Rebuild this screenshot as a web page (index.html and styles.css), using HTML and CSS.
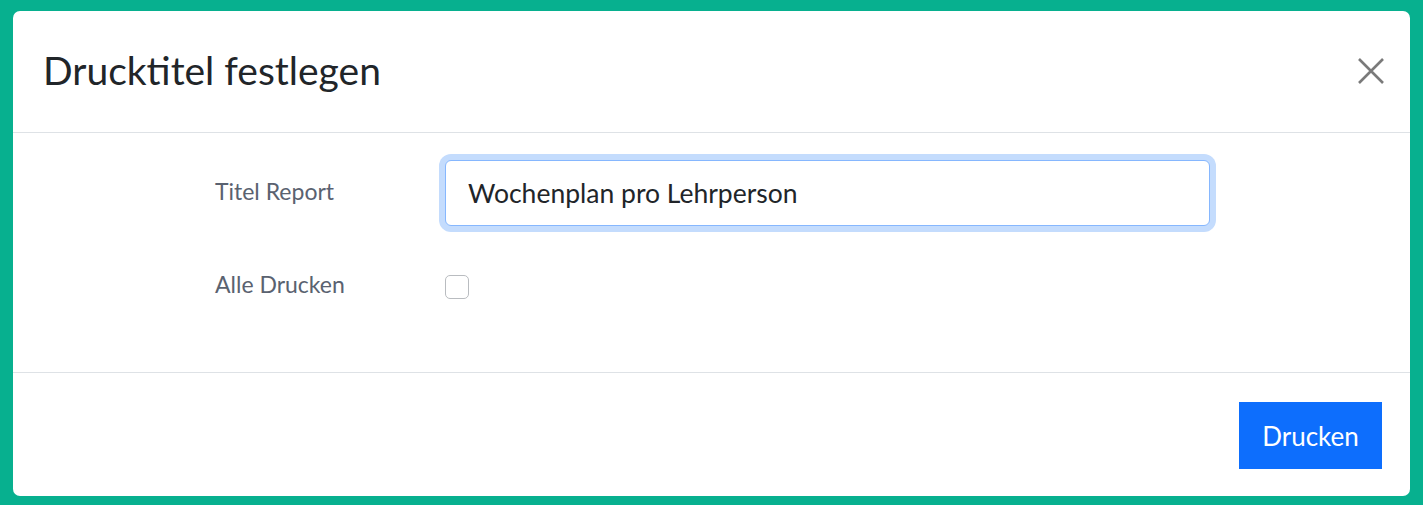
FILE: index.html
```html
<!DOCTYPE html>
<html lang="de">
<head>
<meta charset="utf-8">
<title>Drucktitel festlegen</title>
<link rel="stylesheet" href="styles.css">
</head>
<body>
<div class="modal">
  <div class="modal-header">
    <h1 class="modal-title">Drucktitel festlegen</h1>
    <button class="close" type="button" aria-label="Schließen">
      <svg width="26" height="26" viewBox="0 0 26 26"><path d="M1 1 L25 25 M25 1 L1 25" stroke="#7a7a7a" stroke-width="2.6" fill="none"/></svg>
    </button>
  </div>
  <div class="modal-body">
    <div class="row row-title">
      <label class="label" for="titel">Titel Report</label>
      <input id="titel" class="input" type="text" value="Wochenplan pro Lehrperson">
    </div>
    <div class="row row-check">
      <label class="label" for="alle">Alle Drucken</label>
      <span class="checkbox"></span>
    </div>
  </div>
  <div class="modal-footer">
    <button class="btn" type="button">Drucken</button>
  </div>
</div>
</body>
</html>
```
FILE: styles.css
```css
html, body {
  margin: 0;
  padding: 0;
}
body {
  background: #07b08f;
  font-family: Lato, "Open Sans", sans-serif;
  padding: 11px 13px 9px 13px;
  height: 505px;
  box-sizing: border-box;
}
.modal {
  background: #fff;
  border-radius: 7px;
  height: 485px;
  display: flex;
  flex-direction: column;
}
.modal-header {
  height: 122px;
  border-bottom: 1px solid #dee2e6;
  display: flex;
  align-items: center;
  justify-content: space-between;
  padding: 0 26px 0 30px;
  box-sizing: border-box;
  flex: none;
}
.modal-title {
  margin: 0;
  font-weight: 400;
  font-size: 39px;
  color: #212529;
  line-height: 1;
  padding-bottom: 2px;
}
.close {
  border: 0;
  background: transparent;
  padding: 0;
  width: 26px;
  height: 26px;
  display: flex;
  margin-bottom: 2px;
}
.modal-body {
  height: 240px;
  border-bottom: 1px solid #dee2e6;
  box-sizing: border-box;
  padding: 21px 0 0 202px;
  display: flex;
  flex-direction: column;
  flex: none;
}
.row {
  display: flex;
  align-items: center;
}
.label {
  width: 230px;
  font-size: 23px;
  color: #5a6270;
}
.row-title .label {
  margin-top: -4px;
}
.input {
  width: 765px;
  height: 66px;
  box-sizing: border-box;
  border: 1px solid #86b7fe;
  border-radius: 6px;
  box-shadow: 0 0 0 6px #c4dcfd;
  padding: 0 22px;
  font-family: inherit;
  font-size: 26.5px;
  color: #212529;
  outline: none;
  margin: 6px 0;
}
.row-check {
  margin-top: 43px;
}
.row-check .label {
  margin-top: -6px;
}
.checkbox {
  width: 24px;
  height: 24px;
  box-sizing: border-box;
  border: 1px solid #b9bcc0;
  border-radius: 5px;
}
.modal-footer {
  flex: 1;
  display: flex;
  justify-content: flex-end;
  align-items: flex-start;
  padding: 29px 28px 0 0;
}
.btn {
  width: 143px;
  height: 67px;
  border: 0;
  border-radius: 0;
  background: #0d6efd;
  color: #fff;
  font-family: inherit;
  font-size: 26px;
  padding: 0;
}
```
